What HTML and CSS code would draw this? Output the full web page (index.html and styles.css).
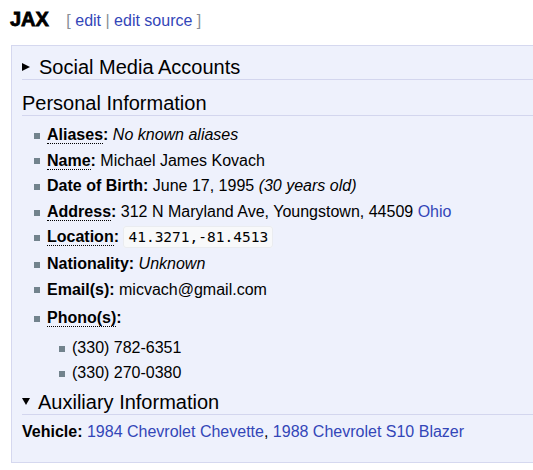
FILE: index.html
```html
<!DOCTYPE html>
<html lang="en">

<head>
    <meta charset="UTF-8">
    <meta name="viewport" content="width=device-width, initial-scale=1.0">
    <title>JAX</title>
    <link rel="stylesheet" href="styles.css">
</head>

<body>
    <div class="page-head">
        <h2 class="title">JAX</h2>
        <span class="edit-links">[ <a href="#">edit</a> | <a href="#">edit source</a> ]</span>
    </div>

    <div class="profile">
        <details class="section">
            <summary>Social Media Accounts</summary>
        </details>

        <h3 class="section-title">Personal Information</h3>
        <ul class="facts">
            <li><b><span class="term">Aliases</span>:</b> <i>No known aliases</i></li>
            <li><b><span class="term">Name</span>:</b> Michael James Kovach</li>
            <li><b>Date of Birth:</b> June 17, 1995 <i>(30 years old)</i></li>
            <li><b><span class="term">Address</span>:</b> 312 N Maryland Ave, Youngstown, 44509 <a href="#">Ohio</a></li>
            <li><b><span class="term">Location</span>:</b> <code>41.3271,-81.4513</code></li>
            <li><b>Nationality:</b> <i>Unknown</i></li>
            <li><b>Email(s):</b> micvach@gmail.com</li>
            <li class="phones"><b><span class="term">Phono(s)</span>:</b>
                <ul class="facts sub">
                    <li>(330) 782-6351</li>
                    <li>(330) 270-0380</li>
                </ul>
            </li>
        </ul>

        <details class="section" open>
            <summary>Auxiliary Information</summary>
            <p class="vehicle"><b>Vehicle:</b> <a href="#">1984 Chevrolet Chevette</a>, <a href="#">1988 Chevrolet S10 Blazer</a></p>
        </details>
    </div>
</body>

</html>
```

FILE: styles.css
```css
* {
    margin: 0;
    padding: 0;
    box-sizing: border-box;
}

body {
    font-family: "Liberation Sans", Arial, sans-serif;
    font-size: 16px;
    color: #000;
    background: #fff;
    overflow: hidden;
}

a {
    color: #3346b8;
    text-decoration: none;
}

.page-head {
    height: 45px;
    padding: 7px 10px 0;
    line-height: 24px;
    white-space: nowrap;
}

.title {
    display: inline;
    font-size: 20px;
    font-weight: bold;
    -webkit-text-stroke: 0.8px #000;
    color: #000;
}

.edit-links {
    margin-left: 13px;
    color: #8a8f96;
    font-size: 16px;
}

.profile {
    margin-left: 11px;
    border: 1px solid #d5d8ef;
    border-right: none;
    background: #eef1fc;
    padding: 9px 0 17px 10px;
}

.section summary,
.section-title {
    display: block;
    font-size: 20px;
    font-weight: normal;
    line-height: 24px;
    border-bottom: 1px solid #d3d6ee;
    cursor: pointer;
}

.section summary::-webkit-details-marker {
    display: none;
}

.section summary::before {
    content: "";
    display: inline-block;
    width: 0;
    height: 0;
    border-top: 4px solid transparent;
    border-bottom: 4px solid transparent;
    border-left: 8px solid #000;
    margin-right: 9px;
    vertical-align: 3px;
}

.section[open] summary::before {
    border-left: 4px solid transparent;
    border-right: 4px solid transparent;
    border-top: 7px solid #000;
    border-bottom: none;
    margin-right: 8px;
    vertical-align: 4px;
}

.section-title {
    margin-top: 11px;
    cursor: default;
}

.facts {
    list-style: none;
    margin-top: 6px;
    line-height: 25.6px;
}

.facts li {
    padding-left: 25px;
}

.facts li::before {
    content: "";
    display: inline-block;
    width: 6px;
    height: 6px;
    background: #72838d;
    margin: 0 7px 0 -13px;
    vertical-align: middle;
}

.facts .phones {
    margin-top: 3px;
}

.facts.sub {
    margin-top: 4px;
}

.term {
    border-bottom: 1px dotted #000;
}

code {
    font-family: "DejaVu Sans Mono", monospace;
    font-size: 14.5px;
    background: #f8f9fa;
    border: 1px solid #eaecf0;
    border-radius: 3px;
    padding: 2px 4px;
}

.section[open] summary {
    margin-top: 4px;
}

.vehicle {
    margin-top: 4px;
    line-height: 25.6px;
}
```
